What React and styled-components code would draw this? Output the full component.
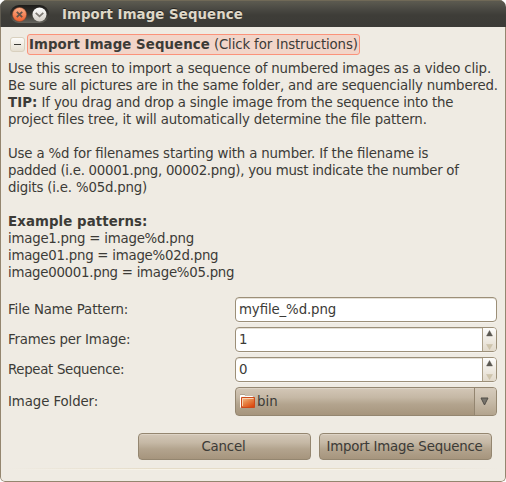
import React from "react";
import styled, { createGlobalStyle } from "styled-components";

const GlobalStyle = createGlobalStyle`
  * { box-sizing: border-box; }
  html { background: #fff; }
  body { margin: 0; overflow: hidden; }
`;

const Window = styled.main`
  width: 506px;
  height: 482px;
  display: flex;
  flex-direction: column;
  background: #efebe3;
  border-radius: 7px 7px 5px 5px;
  overflow: hidden;
  font: 13.333px/17px "DejaVu Sans", Verdana, sans-serif;
  font-feature-settings: "liga" 1;
  color: #3c3b37;
`;

const TitleBar = styled.header`
  flex: none;
  height: 27px;
  display: flex;
  align-items: center;
  padding: 1px 0 0 10px;
  background: linear-gradient(#5c5a50 0, #5b594f 2px, #4a4943 9px, #3e3d38 15px, #3c3b37 100%);
  box-shadow: inset 0 1px #706957, inset 1px 0 #5f5b50;
`;

const WindowControls = styled.div`
  width: 39px;
  height: 18px;
  display: flex;
  align-items: center;
  justify-content: space-between;
  padding: 0 2px;
  border-radius: 9px;
  background: linear-gradient(#1d1c1a, #33322e 50%, #67665f);
`;

const ControlIcon = styled.svg`
  width: 15px;
  height: 15px;
  display: block;
`;

const Title = styled.h1`
  margin: 0 0 0 13px;
  font-size: 13.333px;
  line-height: 17px;
  font-weight: bold;
  letter-spacing: ${(p) => p.$spacing}px;
  color: #dfd8c8;
  text-shadow: 0 -1px #24231f;
  white-space: nowrap;
`;

const Content = styled.div`
  flex: 1;
  display: flex;
  flex-direction: column;
  border: solid #94866f;
  border-width: 0 1px 1px;
  border-radius: 0 0 5px 5px;
  padding: 7px 7px 0;
`;

const Expander = styled.button`
  display: flex;
  align-items: center;
  gap: 2px;
  height: 21px;
  margin: 0;
  padding: 0 0 0 2px;
  border: 0;
  background: none;
  font: inherit;
  font-feature-settings: inherit;
  color: inherit;
`;

const ExpanderBox = styled.span`
  width: 15px;
  height: 15px;
  display: grid;
  place-items: center;
  border: 1px solid #d9d0be;
  border-radius: 3px;
  background: linear-gradient(#fcfbf9, #e6dfd1);
  &::before {
    content: "";
    width: 7px;
    height: 1px;
    background: #3c3b37;
  }
`;

const ExpanderLabel = styled.span`
  width: 333px;
  height: 21px;
  padding: 1px 0 0 1px;
  border: 1px solid #fb927a;
  border-radius: 3px;
  background: #f2d5c9;
  text-align: left;
  white-space: nowrap;
`;

const Instructions = styled.section`
  height: 221px;
  margin-top: 5px;
`;

const Line = styled.p`
  margin: 0;
  height: 17px;
  white-space: pre;
  letter-spacing: ${(p) => p.$spacing || 0}px;
`;

const Run = styled.span`
  letter-spacing: ${(p) => p.$spacing || 0}px;
`;

const Strong = styled.strong`
  letter-spacing: ${(p) => p.$spacing || 0}px;
`;

const Form = styled.form`
  display: grid;
  grid-template-columns: 227px 262px;
  grid-template-rows: 25px 25px 25px 29px;
  row-gap: 5px;
  margin-top: 16px;
  align-items: center;
`;

const Label = styled.label`
  white-space: nowrap;
  letter-spacing: ${(p) => p.$spacing || 0}px;
`;

const Field = styled.div`
  height: 25px;
  display: flex;
  border: 1px solid #9c8f78;
  border-radius: 4px;
  background: #fff;
  box-shadow: inset 0 1px #e6e1d8, 0 1px #f6f3ee;
  overflow: hidden;
`;

const Value = styled.span`
  flex: 1;
  padding: 3px 0 0 3px;
  letter-spacing: ${(p) => p.$spacing || 0}px;
`;

const Stepper = styled.span`
  width: 14px;
  border-left: 1px solid #ab9f89;
  background: linear-gradient(#fdfcfb, #e2dacb);
`;

const StepperArrows = styled.svg`
  display: block;
  width: 13px;
  height: 23px;
`;

const metal = `
  border: 1px solid #948670;
  border-radius: 4px;
  background: linear-gradient(#d3c7b7, #c5b8a5 35%, #b3a48e 60%, #a6957d);
  box-shadow: inset 0 1px #ddd3c5;
`;

const Combo = styled.div`
  ${metal}
  height: 29px;
  display: flex;
  align-items: stretch;
`;

const FolderIcon = styled.svg`
  flex: none;
  width: 17px;
  height: 16px;
  margin: 6px 1px 0 3px;
`;

const ComboText = styled.span`
  flex: 1;
  padding-top: 5px;
`;

const ComboArrow = styled.span`
  width: 22px;
  display: grid;
  place-items: center;
  padding-right: 2px;
  border-left: 1px solid #938570;
  background: linear-gradient(#d6cbbc, #c8bcaa 45%, #b3a48e);
  border-radius: 0 3px 3px 0;
`;

const ArrowIcon = styled.svg`
  width: 9px;
  height: 9px;
`;

const Actions = styled.footer`
  display: flex;
  justify-content: flex-end;
  gap: 8px;
  margin: 17px 6px 0 0;
`;

const Button = styled.button`
  ${metal}
  width: 173px;
  height: 27px;
  padding: 0 2px 1px 0;
  font: inherit;
  color: inherit;
  white-space: nowrap;
  letter-spacing: ${(p) => p.$spacing || 0}px;
`;

const Separator = styled.hr`
  width: 490px;
  height: 2px;
  margin: 8px 0 0;
  border: 0;
  background: linear-gradient(90deg, transparent, #e5dcc8 30%, #e5dcc8 70%, transparent) 0 0 / 100% 1px no-repeat,
    linear-gradient(90deg, transparent, #f8f4e9 30%, #f8f4e9 70%, transparent) 0 1px / 100% 1px no-repeat;
`;

function SpinField({ value }) {
  return (
    <Field>
      <Value>{value}</Value>
      <Stepper>
        <StepperArrows viewBox="0 0 13 23">
          <path d="M6.5 2.5L9.5 8H3.5Z" fill="#5b5851" stroke="#5b5851" strokeWidth=".4" />
          <path d="M3.5 16.5H9.5L6.5 21.5Z" fill="#cfc5ac" stroke="#c4b99e" strokeWidth=".4" />
        </StepperArrows>
      </Stepper>
    </Field>
  );
}

export default function App() {
  return (
    <>
      <GlobalStyle />
      <Window>
        <TitleBar>
          <WindowControls>
            <ControlIcon viewBox="0 0 15 15">
              <defs>
                <linearGradient id="closeFill" x2="0" y2="1">
                  <stop stopColor="#fdb08a" />
                  <stop offset="1" stopColor="#ee5f2e" />
                </linearGradient>
              </defs>
              <circle cx="7.5" cy="7.5" r="7" fill="url(#closeFill)" stroke="#8e4528" strokeWidth=".5" />
              <path d="M4.8 4.8L10.2 10.2M10.2 4.8L4.8 10.2" stroke="#65544a" strokeWidth="1.8" />
            </ControlIcon>
            <ControlIcon viewBox="0 0 15 15">
              <defs>
                <linearGradient id="menuFill" x2="0" y2="1">
                  <stop stopColor="#fff" />
                  <stop offset="1" stopColor="#d3cec6" />
                </linearGradient>
              </defs>
              <circle cx="7.5" cy="7.5" r="7" fill="url(#menuFill)" />
              <path d="M3.7 5.8L7.5 9.3L11.3 5.8" fill="none" stroke="#7d7973" strokeWidth="1.8" />
            </ControlIcon>
          </WindowControls>
          <Title $spacing={0.07}>Import Image Sequence</Title>
        </TitleBar>
        <Content>
          <Expander>
            <ExpanderBox />
            <ExpanderLabel>
              <Strong $spacing={0.07}>Import Image Sequence</Strong>
              <Run $spacing={-0.14}> (Click for Instructions)</Run>
            </ExpanderLabel>
          </Expander>
          <Instructions>
            <Line $spacing={-0.17}>Use this screen to import a sequence of numbered images as a video clip.</Line>
            <Line $spacing={-0.18}>Be sure all pictures are in the same folder, and are sequencially numbered.</Line>
            <Line $spacing={-0.19}><Strong $spacing={0.1}>TIP:</Strong> If you drag and drop a single image from the sequence into the</Line>
            <Line $spacing={-0.146}>project files tree, it will automatically determine the file pattern.</Line>
            <Line />
            <Line $spacing={-0.165}>Use a %d for filenames starting with a number. If the filename is</Line>
            <Line $spacing={-0.285}>padded (i.e. 00001.png, 00002.png), you must indicate the number of</Line>
            <Line $spacing={-0.2}>digits (i.e. %05d.png)</Line>
            <Line />
            <Line><Strong $spacing={0.09}>Example patterns:</Strong></Line>
            <Line $spacing={-0.23}>image1.png = image%d.png</Line>
            <Line $spacing={-0.245}>image01.png = image%02d.png</Line>
            <Line $spacing={-0.265}>image00001.png = image%05.png</Line>
          </Instructions>
          <Form>
            <Label $spacing={-0.13}>File Name Pattern:</Label>
            <Field><Value $spacing={-0.12}>myfile_%d.png</Value></Field>
            <Label $spacing={-0.18}>Frames per Image:</Label>
            <SpinField value="1" />
            <Label $spacing={-0.32}>Repeat Sequence:</Label>
            <SpinField value="0" />
            <Label $spacing={-0.1}>Image Folder:</Label>
            <Combo>
              <FolderIcon viewBox="0 0 17 16">
                <defs>
                  <linearGradient id="folderFill" x2=".7" y2="1">
                    <stop stopColor="#f6c8a0" />
                    <stop offset=".45" stopColor="#e88a4c" />
                    <stop offset="1" stopColor="#db4a10" />
                  </linearGradient>
                </defs>
                <path d="M1.5 13.5V1.5H5.5L6.5 2.5H13.5V5" fill="#f7f5f2" stroke="#fff" />
                <path d="M1 .5H6" stroke="#a89c89" strokeWidth=".8" />
                <path d="M2.5 13.5V3.5H15.5V13.5Z" fill="url(#folderFill)" stroke="#cd4a1a" />
                <path d="M3.5 12V4.5H14.5" fill="none" stroke="#f8d0ac" />
              </FolderIcon>
              <ComboText>bin</ComboText>
              <ComboArrow>
                <ArrowIcon viewBox="0 0 9 9"><path d="M1 1H8L4.5 8Z" fill="#77736b" stroke="#514e48" /></ArrowIcon>
              </ComboArrow>
            </Combo>
          </Form>
          <Actions>
            <Button $spacing={-0.2}>Cancel</Button>
            <Button $spacing={-0.19}>Import Image Sequence</Button>
          </Actions>
          <Separator />
        </Content>
      </Window>
    </>
  );
}
